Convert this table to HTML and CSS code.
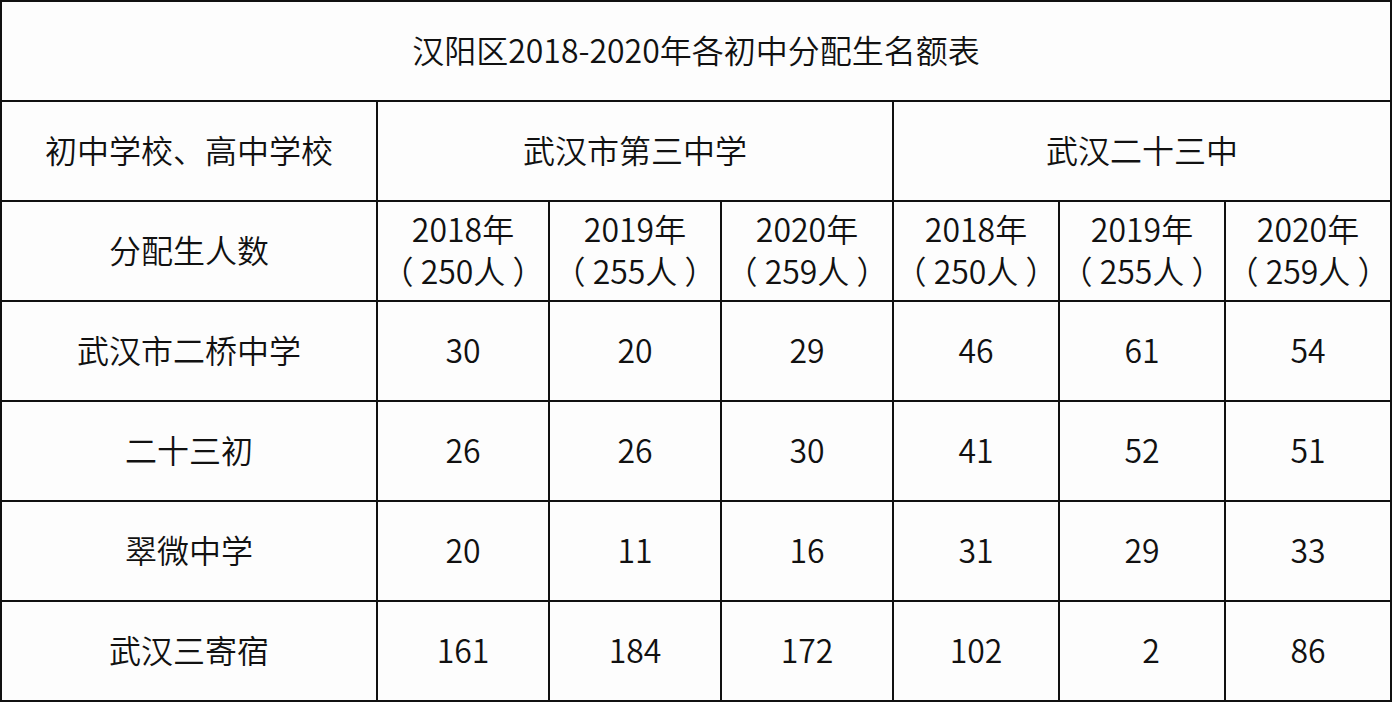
FILE: index.html
```html
<!DOCTYPE html>
<html lang="zh-CN">
<head>
<meta charset="utf-8">
<title>汉阳区2018-2020年各初中分配生名额表</title>
<link rel="stylesheet" href="styles.css">
</head>
<body>
<table class="quota">
  <colgroup>
    <col class="c-name">
    <col class="c-a"><col class="c-a"><col class="c-a">
    <col class="c-b"><col class="c-b"><col class="c-b">
  </colgroup>
  <tr class="row">
    <td colspan="7" class="title">汉阳区2018-2020年各初中分配生名额表</td>
  </tr>
  <tr class="row">
    <td>初中学校、高中学校</td>
    <td colspan="3">武汉市第三中学</td>
    <td colspan="3">武汉二十三中</td>
  </tr>
  <tr class="row">
    <td>分配生人数</td>
    <td class="two">2018年<br>（ 250人 ）</td>
    <td class="two">2019年<br>（ 255人 ）</td>
    <td class="two">2020年<br>（ 259人 ）</td>
    <td class="two">2018年<br>（ 250人 ）</td>
    <td class="two">2019年<br>（ 255人 ）</td>
    <td class="two">2020年<br>（ 259人 ）</td>
  </tr>
  <tr class="row">
    <td>武汉市二桥中学</td>
    <td>30</td><td>20</td><td>29</td><td>46</td><td>61</td><td>54</td>
  </tr>
  <tr class="row">
    <td>二十三初</td>
    <td>26</td><td>26</td><td>30</td><td>41</td><td>52</td><td>51</td>
  </tr>
  <tr class="row">
    <td>翠微中学</td>
    <td>20</td><td>11</td><td>16</td><td>31</td><td>29</td><td>33</td>
  </tr>
  <tr class="row">
    <td>武汉三寄宿</td>
    <td>161</td><td>184</td><td>172</td><td>102</td><td class="shift">2</td><td>86</td>
  </tr>
</table>
</body>
</html>
```

FILE: styles.css
```css
html, body {
  margin: 0;
  padding: 0;
  background: #fdfdfd;
}

.quota {
  border-collapse: collapse;
  table-layout: fixed;
  width: 1391px;
  font-family: "Noto Sans CJK SC", "Noto Sans", sans-serif;
  font-size: 32px;
  font-weight: 350;
  color: #111;
}

.c-name { width: 376px; }
.c-a { width: 172px; }
.c-b { width: 166px; }

.row { height: 100px; }

.quota td {
  border: 2px solid #111;
  text-align: center;
  vertical-align: middle;
  padding: 0 0 5px;
  line-height: 40px;
  white-space: pre;
}

.quota td.two {
  line-height: 42px;
  padding-bottom: 4px;
}

.quota td.shift {
  padding-left: 18px;
}
```
